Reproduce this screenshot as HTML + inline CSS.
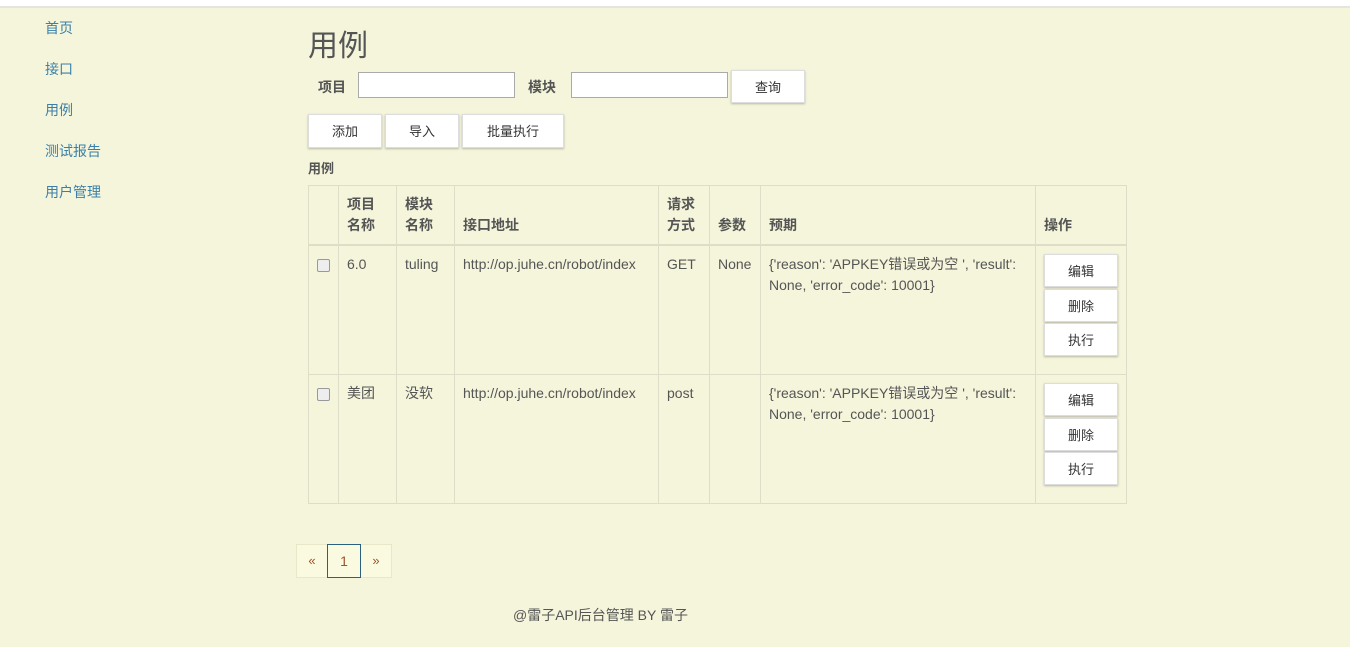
<!DOCTYPE html>
<html><head><meta charset="utf-8"><style>
body{margin:0;background:#f5f5dc;font-family:"Liberation Sans","Noto Sans CJK SC",sans-serif;font-size:14px;color:#555;width:1350px;height:647px;position:relative;overflow:hidden}
.top{position:absolute;left:0;top:0;width:1350px;height:6px;background:#fff;border-bottom:2px solid #e4e4e0}
.nav a{position:absolute;left:45px;color:#3a7fa8;text-decoration:none;font-size:14px}
h1{position:absolute;left:308px;top:21px;margin:0;font-size:30px;font-weight:normal;color:#555}
.lbl{position:absolute;font-weight:bold;font-size:14px}
.inp{position:absolute;height:26px;background:#fff;border:1px solid #aaa;box-sizing:border-box}
.btn{position:absolute;background:#fff;border:1px solid #ddd;box-shadow:0 1px 2px rgba(0,0,0,.25);box-sizing:border-box;text-align:center;font-size:13px;color:#333}
table{position:absolute;left:308px;top:185px;border-collapse:collapse;width:819px}
td,th{border:1px solid #ddddc8;padding:8px;vertical-align:top;text-align:left;line-height:21px}
th{vertical-align:bottom;font-weight:bold;border-bottom:2px solid #ddddc8}
.cb{width:11px;height:11px;border:1px solid #999;border-radius:2px;background:#eee;margin-top:5px}
.pg{position:absolute;top:544px;height:34px;box-sizing:border-box;border:1px solid #e8e8c8;background:#fafae0;color:#a0522d;text-align:center;line-height:32px;font-size:13px}
</style></head><body>
<div class="top"></div>
<div class="nav"><a style="top:18px">首页</a><a style="top:59px">接口</a><a style="top:100px">用例</a><a style="top:141px">测试报告</a><a style="top:182px">用户管理</a></div>
<h1>用例</h1>
<div class="lbl" style="left:318px;top:77px">项目</div>
<div class="inp" style="left:358px;top:72px;width:157px"></div>
<div class="lbl" style="left:528px;top:77px">模块</div>
<div class="inp" style="left:571px;top:72px;width:157px"></div>
<div class="btn" style="left:731px;top:70px;width:74px;height:33px;line-height:33px">查询</div>
<div class="btn" style="left:308px;top:114px;width:74px;height:34px;line-height:34px">添加</div>
<div class="btn" style="left:385px;top:114px;width:74px;height:34px;line-height:34px">导入</div>
<div class="btn" style="left:462px;top:114px;width:102px;height:34px;line-height:34px">批量执行</div>
<div class="lbl" style="left:308px;top:158px;font-size:13px">用例</div>
<table>
<tr style="height:59px"><th style="width:13px"></th><th style="width:41px">项目<br>名称</th><th style="width:41px">模块<br>名称</th><th style="width:187px">接口地址</th><th style="width:34px">请求<br>方式</th><th style="width:34px">参数</th><th style="width:258px">预期</th><th>操作</th></tr>
<tr style="height:129px"><td><div class="cb"></div></td><td>6.0</td><td>tuling</td><td>http://op.juhe.cn/robot/index</td><td>GET</td><td>None</td><td>{'reason': 'APPKEY错误或为空 ', 'result': None, 'error_code': 10001}</td><td></td></tr>
<tr style="height:129px"><td><div class="cb"></div></td><td>美团</td><td>没软</td><td>http://op.juhe.cn/robot/index</td><td>post</td><td></td><td>{'reason': 'APPKEY错误或为空 ', 'result': None, 'error_code': 10001}</td><td></td></tr>
</table>
<div class="btn" style="left:1044px;top:254px;width:74px;height:33px;line-height:33px">编辑</div>
<div class="btn" style="left:1044px;top:289px;width:74px;height:33px;line-height:33px">删除</div>
<div class="btn" style="left:1044px;top:323px;width:74px;height:33px;line-height:33px">执行</div>
<div class="btn" style="left:1044px;top:383px;width:74px;height:33px;line-height:33px">编辑</div>
<div class="btn" style="left:1044px;top:418px;width:74px;height:33px;line-height:33px">删除</div>
<div class="btn" style="left:1044px;top:452px;width:74px;height:33px;line-height:33px">执行</div>
<div class="pg" style="left:296px;width:32px">«</div>
<div class="pg" style="left:360px;width:32px">»</div>
<div class="pg" style="left:327px;width:34px;border-color:#2a6080;font-size:14px">1</div>
<div style="position:absolute;left:513px;top:605px">@雷子API后台管理 BY 雷子</div>
</body></html>
